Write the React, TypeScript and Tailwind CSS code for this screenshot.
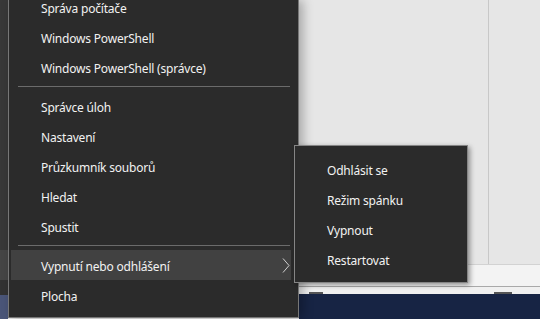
import React from "react";

const font = { fontFamily: '"Noto Sans", "Open Sans", sans-serif' };

function Row({ label, active, chevron }: { label: string; active?: boolean; chevron?: boolean }) {
  return (
    <div
      className={`relative flex h-[30px] items-center pl-[30px] text-[12px] tracking-[-0.2px] text-[#f2f2f2] ${active ? "bg-[#414141]" : ""}`}
    >
      <span className="relative top-[2px] leading-none">{label}</span>
      {chevron && (
        <svg className="absolute right-[1px] top-[8px]" width="8" height="15" viewBox="0 0 8 15">
          <path d="M1 0.5 L7 7.5 L1 14.5" fill="none" stroke="#d0d0d0" strokeWidth="1" />
        </svg>
      )}
    </div>
  );
}

function Sep() {
  return (
    <div className="h-[9px] pl-[7px] pr-[1px] pt-[4px]">
      <div className="h-px bg-[#6b6b6b]" />
    </div>
  );
}

function SubRow({ label }: { label: string }) {
  return (
    <div className="flex h-[30px] items-center pl-[32px] text-[12px] tracking-[-0.2px] text-[#f2f2f2]">
      <span className="relative top-[1.5px] leading-none">{label}</span>
    </div>
  );
}

export default function App() {
  return (
    <div className="relative flex h-[319px] w-[540px] overflow-hidden bg-[#e6e6e6]" style={font}>
      {/* left strip */}
      <div className="flex w-[8px] flex-col">
        <div className="h-[250px] bg-[#383838]" />
        <div className="h-[30px] bg-[#454545]" />
        <div className="h-[15px] bg-[#323232]" />
        <div className="flex-1 bg-[#4a5578]" />
      </div>

      {/* main menu */}
      <div className="relative z-10 mb-[1px] w-[291px] border border-t-0 border-[#777777] bg-[#2b2b2b] shadow-[4px_0_10px_rgba(0,0,0,0.28)]">
        <div className="-mt-[8px] pl-[2px] pr-[7px]">
          <Row label="Správa počítače" />
          <Row label="Windows PowerShell" />
          <Row label="Windows PowerShell (správce)" />
          <Sep />
          <Row label="Správce úloh" />
          <Row label="Nastavení" />
          <Row label="Průzkumník souborů" />
          <Row label="Hledat" />
          <Row label="Spustit" />
          <Sep />
          <Row label="Vypnutí nebo odhlášení" active chevron />
          <Row label="Plocha" />
        </div>
      </div>

      {/* right background panel */}
      <div className="flex flex-1 flex-col">
        <div className="flex h-[265px] border-b border-[#d2d2d2]">
          <div className="w-[190px] border-r border-[#c8c8c8]" />
          <div className="flex-1" />
        </div>
        <div className="h-[22px] border-b border-[#a9a9a9] bg-[#f3f3f3]" />
        <div className="relative h-[7px] bg-[#f0f0f0]">
          <div className="absolute bottom-0 left-[10px] h-[2px] w-[14px] bg-[#555]" />
          <div className="absolute bottom-0 left-[195px] h-[2px] w-[18px] bg-[#555]" />
        </div>
        <div className="flex-1 bg-[#172444]" />
      </div>

      {/* submenu */}
      <div className="absolute left-[294px] top-[145px] z-20 h-[138px] w-[174px] border border-[#858585] bg-[#2b2b2b] pt-[8px] shadow-[2px_2px_5px_rgba(0,0,0,0.4)]">
        <SubRow label="Odhlásit se" />
        <SubRow label="Režim spánku" />
        <SubRow label="Vypnout" />
        <SubRow label="Restartovat" />
      </div>
    </div>
  );
}
